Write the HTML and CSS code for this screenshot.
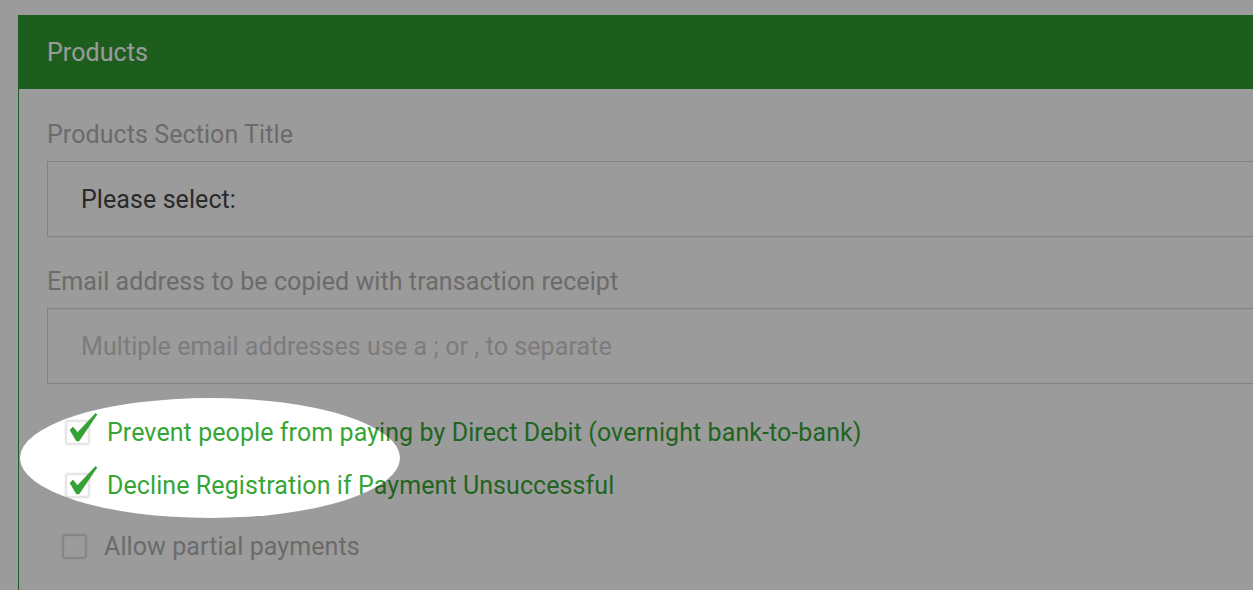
FILE: index.html
```html
<!DOCTYPE html>
<html lang="en">
<head>
    <meta charset="UTF-8">
    <meta name="viewport" content="width=device-width, initial-scale=1.0">
    <link rel="stylesheet" href="styles.css">
    <title>Products</title>
</head>
<body>
    <div class="panel">
        <div class="panel-head">Products</div>
        <div class="panel-body">
            <label class="field-label">Products Section Title</label>
            <div class="field">Please select:</div>

            <label class="field-label second">Email address to be copied with transaction receipt</label>
            <div class="field placeholder">Multiple email addresses use a ; or , to separate</div>

            <div class="check-row checked first-check">
                <span class="box">
                    <svg class="tick" viewBox="0 0 30 30" width="30" height="30">
                        <path d="M1 17 L4 14 L8.5 19.5 L26.5 0.5 L28 1.5 L10 28 L7.5 28 Z" />
                    </svg>
                </span>
                <span class="check-text">Prevent people from paying by Direct Debit (overnight bank-to-bank)</span>
            </div>
            <div class="check-row checked">
                <span class="box">
                    <svg class="tick" viewBox="0 0 30 30" width="30" height="30">
                        <path d="M1 17 L4 14 L8.5 19.5 L26.5 0.5 L28 1.5 L10 28 L7.5 28 Z" />
                    </svg>
                </span>
                <span class="check-text">Decline Registration if Payment Unsuccessful</span>
            </div>
            <div class="check-row plain">
                <span class="box"></span>
                <span class="check-text">Allow partial payments</span>
            </div>
        </div>
    </div>

    <div class="spotlight"></div>
</body>
</html>
```

FILE: styles.css
```css
html, body {
    margin: 0;
    padding: 0;
    background-color: #ffffff;
    font-family: Roboto, "Liberation Sans", sans-serif;
    letter-spacing: 0.08px;
    overflow: hidden;
    height: 590px;
}
.panel {
    margin: 15px -60px 0 18px;
    border-left: 1px solid #319b33;
}
.panel-head {
    background-color: #319b33;
    color: #ffffff;
    font-size: 25px;
    height: 74px;
    line-height: 76px;
    padding-left: 28px;
}
.panel-body {
    padding: 31px 0 29px 28px;
}
.field-label {
    display: block;
    font-size: 25px;
    line-height: 30px;
    color: #b0b0b0;
}
.field-label.second {
    margin-top: 30px;
}
.field {
    margin-top: 11px;
    height: 74px;
    line-height: 76px;
    border: 1px solid #d6d6d6;
    padding-left: 33px;
    font-size: 25px;
    color: #454545;
}
.field.placeholder {
    color: #cccccc;
}
.check-row {
    display: flex;
    align-items: center;
    height: 30px;
    font-size: 25px;
}
.first-check {
    margin-top: 33px;
}
.checked {
    margin-bottom: 23px;
    margin-left: 18px;
    color: #36a536;
}
.plain {
    margin-top: 31px;
    margin-left: 15px;
    color: #b0b0b0;
}
.box {
    position: relative;
    width: 21px;
    height: 21px;
    border: 2px solid #e6e6e6;
    border-radius: 3px;
    box-shadow: 0 0 2px rgba(0, 0, 0, 0.12), inset 0 0 2px rgba(0, 0, 0, 0.1);
    margin-right: 17px;
    flex-shrink: 0;
}
.plain .box {
    border-color: #dddddd;
}
.tick {
    position: absolute;
    left: 2px;
    top: -9px;
    fill: #34a234;
    stroke: #268c26;
    stroke-width: 0.5;
}
.spotlight {
    position: absolute;
    left: 20px;
    top: 398px;
    width: 380px;
    height: 120px;
    border-radius: 50%;
    box-shadow: 0 0 0 2000px rgba(0, 0, 0, 0.392);
    pointer-events: none;
}
```
